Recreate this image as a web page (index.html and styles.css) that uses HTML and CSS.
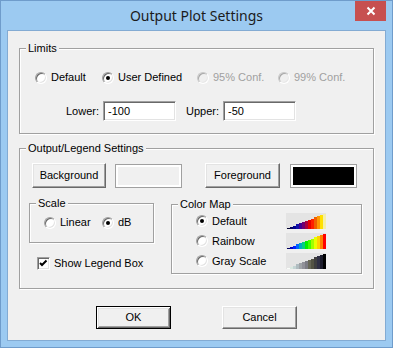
FILE: index.html
```html
<!DOCTYPE html>
<html>
<head>
<meta charset="utf-8">
<link rel="stylesheet" href="styles.css">
</head>
<body>
<div class="window">
  <div class="titlebar">
    <span></span>
    <div class="title">Output Plot Settings</div>
    <div class="close">
      <svg width="31" height="20" viewBox="0 0 31 20"><path d="M12.5 6.5 L19.5 13.5 M19.5 6.5 L12.5 13.5" stroke="#fff" stroke-width="2" fill="none"/></svg>
    </div>
  </div>
  <div class="client">
    <div class="group limits">
      <div class="group-title">Limits</div>
      <div class="radio-row">
        <label class="radio w-def"><span class="rb"></span>Default</label>
        <label class="radio w-user"><span class="rb on"></span>User Defined</label>
        <label class="radio w-95 dis"><span class="rb dis"></span>95% Conf.</label>
        <label class="radio dis"><span class="rb dis"></span>99% Conf.</label>
      </div>
      <div class="field-row">
        <span>Lower:</span>
        <div class="txt">-100</div>
        <span class="upper-label">Upper:</span>
        <div class="txt">-50</div>
      </div>
    </div>

    <div class="group output">
      <div class="group-title">Output/Legend Settings</div>
      <div class="btn-row">
        <div class="btn btn-bg">Background</div>
        <div class="swatch swatch-bg"><div class="fill fill-bg"></div></div>
        <div class="btn btn-fg">Foreground</div>
        <div class="swatch swatch-fg"><div class="fill fill-fg"></div></div>
      </div>
      <div class="lower">
        <div class="left-col">
          <div class="group scale">
            <div class="group-title">Scale</div>
            <div class="radio-row">
              <label class="radio w-lin"><span class="rb"></span>Linear</label>
              <label class="radio"><span class="rb on"></span>dB</label>
            </div>
          </div>
          <label class="check-row">
            <span class="cb"><svg width="11" height="11" viewBox="0 0 11 11"><path d="M2 5 L4 7 L8.5 2.5" stroke="#000" stroke-width="2" fill="none"/></svg></span>
            Show Legend Box
          </label>
        </div>
        <div class="group cmap">
          <div class="group-title">Color Map</div>
          <div class="cmap-row">
            <label class="radio cmap-label"><span class="rb on"></span>Default</label>
            <svg class="cmap-img" width="40" height="16" viewBox="0 0 40 16">
              <rect width="40" height="16" fill="#e4e4e4"/>
              <rect x="1" y="15" width="3" height="1" fill="#000030"/>
              <rect x="4" y="14" width="3" height="2" fill="#000060"/>
              <rect x="7" y="13" width="3" height="3" fill="#000090"/>
              <rect x="10" y="11" width="3" height="5" fill="#1010a8"/>
              <rect x="13" y="10" width="3" height="6" fill="#400090"/>
              <rect x="16" y="9" width="3" height="7" fill="#700070"/>
              <rect x="19" y="8" width="3" height="8" fill="#a80040"/>
              <rect x="22" y="7" width="3" height="9" fill="#e80000"/>
              <rect x="25" y="6" width="3" height="10" fill="#ff2000"/>
              <rect x="28" y="4" width="3" height="12" fill="#f06000"/>
              <rect x="31" y="3" width="3" height="13" fill="#ff9800"/>
              <rect x="34" y="2" width="3" height="14" fill="#ffe000"/>
              <rect x="37" y="1" width="3" height="15" fill="#f4f0a8"/>
            </svg>
          </div>
          <div class="cmap-row">
            <label class="radio cmap-label"><span class="rb"></span>Rainbow</label>
            <svg class="cmap-img" width="40" height="16" viewBox="0 0 40 16">
              <rect width="40" height="16" fill="#e4e4e4"/>
              <rect x="1" y="15" width="3" height="1" fill="#000060"/>
              <rect x="4" y="14" width="3" height="2" fill="#0000c0"/>
              <rect x="7" y="13" width="3" height="3" fill="#0020ff"/>
              <rect x="10" y="11" width="3" height="5" fill="#0064ff"/>
              <rect x="13" y="10" width="3" height="6" fill="#00a8c0"/>
              <rect x="16" y="9" width="3" height="7" fill="#00d080"/>
              <rect x="19" y="8" width="3" height="8" fill="#00f000"/>
              <rect x="22" y="7" width="3" height="9" fill="#40ff00"/>
              <rect x="25" y="6" width="3" height="10" fill="#a0ff00"/>
              <rect x="28" y="4" width="3" height="12" fill="#e8ff00"/>
              <rect x="31" y="3" width="3" height="13" fill="#ffd000"/>
              <rect x="34" y="2" width="3" height="14" fill="#ff8000"/>
              <rect x="37" y="1" width="3" height="15" fill="#ff0000"/>
            </svg>
          </div>
          <div class="cmap-row">
            <label class="radio cmap-label"><span class="rb"></span>Gray Scale</label>
            <svg class="cmap-img" width="40" height="16" viewBox="0 0 40 16">
              <rect width="40" height="16" fill="#e4e4e4"/>
              <rect x="1" y="15" width="3" height="1" fill="#f8fcf8"/>
              <rect x="4" y="14" width="3" height="2" fill="#d8e8e0"/>
              <rect x="7" y="13" width="3" height="3" fill="#c4d4d4"/>
              <rect x="10" y="11" width="3" height="5" fill="#b0bcc0"/>
              <rect x="13" y="10" width="3" height="6" fill="#a0a4a8"/>
              <rect x="16" y="9" width="3" height="7" fill="#909098"/>
              <rect x="19" y="8" width="3" height="8" fill="#7c7c84"/>
              <rect x="22" y="7" width="3" height="9" fill="#686858"/>
              <rect x="25" y="6" width="3" height="10" fill="#545444"/>
              <rect x="28" y="4" width="3" height="12" fill="#404040"/>
              <rect x="31" y="3" width="3" height="13" fill="#303044"/>
              <rect x="34" y="2" width="3" height="14" fill="#1c1c2c"/>
              <rect x="37" y="1" width="3" height="15" fill="#000000"/>
            </svg>
          </div>
        </div>
      </div>
    </div>

    <div class="dialog-buttons">
      <div class="btn btn-dlg default">OK</div>
      <div class="btn btn-dlg">Cancel</div>
    </div>
  </div>
</div>
</body>
</html>
```

FILE: styles.css
```css
* { box-sizing: border-box; }

body {
  margin: 0;
  font-family: "Liberation Sans", Arial, sans-serif;
  font-size: 11px;
  line-height: 13px;
  color: #000;
}

.window {
  width: 393px;
  height: 348px;
  border: 1px solid #6f9ccb;
  background: #9ccaf1;
  padding: 0 6px 6px;
  display: flex;
  flex-direction: column;
}

.titlebar {
  flex: none;
  height: 29px;
  display: grid;
  grid-template-columns: 1fr auto 1fr;
}

.title {
  font-family: "Noto Sans", sans-serif;
  font-size: 14px;
  line-height: 29px;
  color: #1b1b1b;
  white-space: nowrap;
}

.close {
  justify-self: end;
  width: 31px;
  height: 20px;
  background: #c75050;
}
.close svg { display: block; }

.client {
  flex: 1;
  border: 1px solid #83abd3;
  background: #f0f0f0;
  padding: 17px 11px 0;
}

.group {
  position: relative;
  border: 1px solid #a0a0a0;
  box-shadow: inset 1px 1px 0 #fff, 1px 1px 0 #fff;
}

.group-title {
  position: absolute;
  top: -7px;
  left: 6px;
  padding: 0 2px;
  background: #f0f0f0;
  white-space: nowrap;
}

.radio-row {
  display: flex;
  height: 13px;
}

.radio {
  display: flex;
  align-items: center;
  gap: 4px;
  white-space: nowrap;
}
.radio.dis { color: #a0a0a0; }

.rb {
  position: relative;
  flex: none;
  width: 12px;
  height: 12px;
  border-radius: 50%;
  border: 1px solid;
  border-color: #a0a0a0 #fff #fff #a0a0a0;
  box-shadow: inset 1px 1px 0 #696969, inset -1px -1px 0 #e3e3e3;
  background: #fff;
}
.rb.on::after {
  content: "";
  position: absolute;
  left: 3px;
  top: 3px;
  width: 4px;
  height: 4px;
  border-radius: 50%;
  background: #000;
}
.rb.dis {
  background: #f0f0f0;
  border-color: #c8c8c8 #fff #fff #c8c8c8;
  box-shadow: inset 1px 1px 0 #a8a8a8, inset -1px -1px 0 #e8e8e8;
}

.w-def { width: 67px; }
.w-user { width: 95px; }
.w-95 { width: 81px; }
.w-lin { width: 58px; }

/* Limits */
.limits {
  padding: 22px 0 12px 15px;
}

.field-row {
  display: flex;
  align-items: center;
  margin-top: 17px;
  padding-left: 31px;
}

.txt {
  width: 73px;
  height: 20px;
  margin-left: 4px;
  padding: 0 4px;
  display: flex;
  align-items: center;
  background: #fff;
  border: 1px solid;
  border-color: #a0a0a0 #fff #fff #a0a0a0;
  box-shadow: inset 1px 1px 0 #696969, inset -1px -1px 0 #e3e3e3;
}

.upper-label { margin-left: 10px; }

/* Output / Legend */
.output {
  margin-top: 14px;
  padding: 14px 0 14px;
}

.btn-row {
  display: flex;
  align-items: flex-start;
  padding-left: 12px;
}

.btn {
  height: 25px;
  display: flex;
  align-items: center;
  justify-content: center;
  background: #f0f0f0;
  border: 1px solid;
  border-color: #fff #696969 #696969 #fff;
  box-shadow: inset -1px -1px 0 #a0a0a0, inset 1px 1px 0 #e3e3e3;
  white-space: nowrap;
}

.btn-bg { width: 74px; }
.btn-fg { width: 75px; margin-left: 23px; }

.swatch {
  width: 67px;
  height: 24px;
  margin-top: 1px;
  border: 1px solid #a0a0a0;
  padding: 2px;
  background: #fff;
}
.swatch-bg { margin-left: 9px; }
.swatch-fg { margin-left: 10px; }
.fill { width: 100%; height: 100%; }
.fill-bg { background: #f0f0f0; }
.fill-fg { background: #000; }

.lower {
  display: flex;
  margin-top: 15px;
  padding-left: 9px;
}

.left-col { width: 125px; }

.scale {
  height: 40px;
  padding: 12px 0 12px 14px;
}

.check-row {
  display: flex;
  align-items: center;
  gap: 4px;
  height: 13px;
  margin-top: 14px;
  padding-left: 8px;
  white-space: nowrap;
}

.cb {
  flex: none;
  width: 13px;
  height: 13px;
  border: 1px solid;
  border-color: #a0a0a0 #fff #fff #a0a0a0;
  box-shadow: inset 1px 1px 0 #696969, inset -1px -1px 0 #e3e3e3;
  background: #fff;
}
.cb svg { display: block; }

.cmap {
  width: 191px;
  height: 70px;
  margin-left: 17px;
  margin-top: 1px;
  padding: 6px 0 2px 24px;
}

.cmap-row {
  display: flex;
  align-items: center;
  height: 20px;
}

.cmap-label { width: 90px; }
.cmap-img { display: block; flex: none; }

/* Dialog buttons */
.dialog-buttons {
  display: flex;
  justify-content: center;
  gap: 51px;
  margin-top: 17px;
}

.btn-dlg {
  width: 75px;
  height: 23px;
}

.btn-dlg.default {
  border: 1px solid #000;
  box-shadow: inset 1px 1px 0 #fff, inset -1px -1px 0 #696969, inset 2px 2px 0 #e3e3e3, inset -2px -2px 0 #a0a0a0;
}
```
